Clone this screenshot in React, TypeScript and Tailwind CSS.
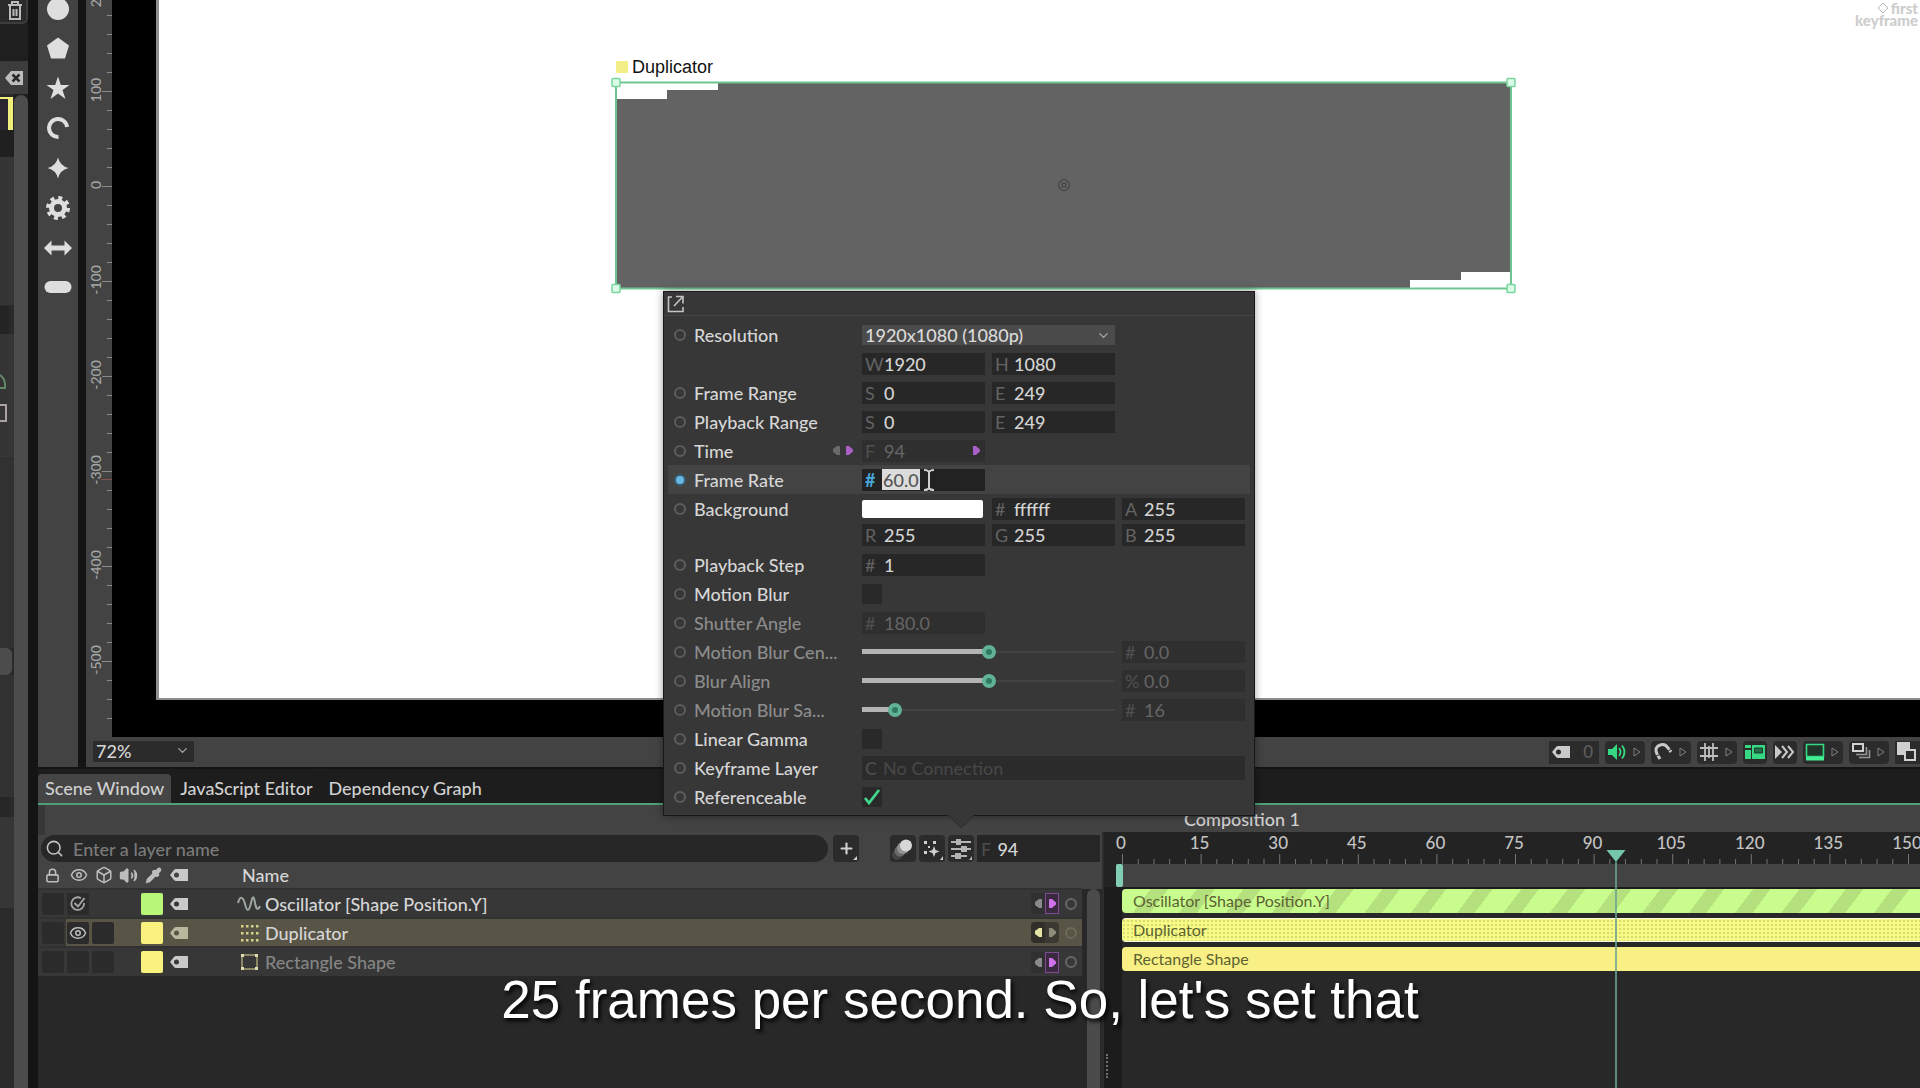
import type { ReactNode } from 'react';
import { Box, ChevronDown, Eye, Lock, Pipette, Plus, Search, Volume2 } from 'lucide-react';

const ZERO_FRAME_X = 0;
const FRAMES_PER_LABEL = 15;
const LABEL_SPACING = 78.6;

interface FieldProps {
  id?: string;
  prefix: string;
  value: string;
  label: string;
  dim?: boolean;
  className?: string;
  children?: ReactNode;
}

function Field({ id, prefix, value, label, dim, className = 'w-[123px]', children }: FieldProps) {
  return (
    <div className={`flex h-[22px] shrink-0 items-center pl-[3px] ${dim ? 'bg-[#2f2f2f]' : 'bg-[#272727]'} ${className}`}>
      <span className={`w-[19px] shrink-0 font-normal ${dim ? 'text-[#505050]' : 'text-[#636363]'}`}>{prefix}</span>
      <input
        id={id}
        aria-label={label}
        defaultValue={value}
        className={`h-full w-full min-w-0 bg-transparent outline-none ${dim ? 'font-normal text-[#666]' : 'text-[#d4d4d4]'}`}
      />
      {children}
    </div>
  );
}

interface RowProps {
  label?: string;
  htmlFor?: string;
  dim?: boolean;
  active?: boolean;
  keys?: boolean;
  children: ReactNode;
}

function Row({ label, htmlFor, dim, active, keys, children }: RowProps) {
  return (
    <div className={`mx-1 flex h-[29px] items-center ${active ? 'bg-[#434343]' : ''}`}>
      <span className="flex w-[26px] shrink-0 justify-center pr-[3px]">
        {label && (
          <span
            className={`size-3 rounded-full border-2 ${active ? 'border-[#365b70] bg-[#6ab8e4]' : 'border-[#5c5c5c]'}`}
          />
        )}
      </span>
      <div className={`flex w-[168px] shrink-0 items-center ${dim ? 'text-[#8c8c8c]' : 'text-[#d6d6d6]'}`}>
        <label htmlFor={htmlFor} className="whitespace-nowrap">{label}</label>
        {keys && (
          <span className="mr-2 ml-auto flex gap-1">
            <KeyArrow left color="#6a6a6a" />
            <KeyArrow color="#a95fc6" />
          </span>
        )}
      </div>
      <div className="flex flex-1 items-center gap-[7px]">{children}</div>
    </div>
  );
}

function KeyArrow({ left, color }: { left?: boolean; color: string }) {
  return (
    <svg width="9" height="11" viewBox="0 0 9 11" className="shrink-0">
      <path d={left ? 'M8 1H5L1 4v3l4 3h3z' : 'M1 1h3l4 3.500v2L4 10H1z'} fill={color} />
    </svg>
  );
}

function Tick({ id, checked }: { id: string; checked?: boolean }) {
  return (
    <span className="relative flex size-5">
      <input id={id} type="checkbox" defaultChecked={checked} className="size-5 appearance-none bg-[#292929]" />
      {checked && (
        <svg viewBox="0 0 20 20" className="pointer-events-none absolute inset-0">
          <path d="M3 11l4 5L17 3" fill="none" stroke="#42d78c" strokeWidth="2.800" />
        </svg>
      )}
    </span>
  );
}

function Slider({ id, value, max }: { id: string; value: number; max: number }) {
  const fill = `${(value / max) * 100}%`;
  return (
    <input
      id={id}
      type="range"
      min={0}
      max={max}
      defaultValue={value}
      className="h-[14px] w-[253px] appearance-none bg-no-repeat [background-position:left_center] [&::-webkit-slider-thumb]:size-[14px] [&::-webkit-slider-thumb]:appearance-none [&::-webkit-slider-thumb]:rounded-full [&::-webkit-slider-thumb]:border-4 [&::-webkit-slider-thumb]:border-[#62b297] [&::-webkit-slider-thumb]:bg-[#2f7a62]"
      style={{
        backgroundImage: 'linear-gradient(#b4b4b4, #b4b4b4), linear-gradient(#424242, #424242)',
        backgroundSize: `${fill} 5px, 100% 2px`,
      }}
    />
  );
}

function TagIcon({ color = '#c9c9c9' }: { color?: string }) {
  return (
    <svg width="20" height="14" viewBox="0 0 20 14" className="shrink-0">
      <path
        d="M1 7L5 2Q6 1 7 1H19V13H7Q6 13 5 12ZM7.500 4.500a2.500 2.500 0 1 0 0 5a2.500 2.500 0 1 0 0-5z"
        fill={color}
        fillRule="evenodd"
      />
    </svg>
  );
}

function SettingsPopup() {
  return (
    <section
      aria-label="Composition settings"
      className="absolute right-[-281px] bottom-full z-10 mb-[19px] w-[592px] border border-[#181818] bg-[#373737] pb-1 text-left text-[18px] leading-[22px] shadow-[0_0_8px_rgba(0,0,0,0.4)]"
    >
      <div className="mb-1 flex h-[24px] items-center border-b border-[#444] pl-[3px]">
        <button aria-label="Open in window">
          <svg width="18" height="18" viewBox="0 0 18 18" fill="none" stroke="#c4c4c4" strokeWidth="1.600">
            <path d="M5 2H1.500v14.500H16V12M7 11L15 2.500M9 1.500h7v7" />
          </svg>
        </button>
      </div>
      <Row label="Resolution" htmlFor="resolution">
        <div className="relative">
          <select
            id="resolution"
            className="h-[20px] w-[253px] appearance-none bg-[#4b4b4b] pl-[3px] text-[18px] leading-[20px] text-[#dadada] outline-none"
          >
            <option>1920x1080 (1080p)</option>
          </select>
          <ChevronDown size={15} className="pointer-events-none absolute top-1 right-1 text-[#aaa]" />
        </div>
      </Row>
      <Row>
        <Field prefix="W" value="1920" label="Width" />
        <Field prefix="H" value="1080" label="Height" />
      </Row>
      <Row label="Frame Range" htmlFor="frame-start">
        <Field id="frame-start" prefix="S" value="0" label="Frame start" />
        <Field prefix="E" value="249" label="Frame end" />
      </Row>
      <Row label="Playback Range" htmlFor="play-start">
        <Field id="play-start" prefix="S" value="0" label="Playback start" />
        <Field prefix="E" value="249" label="Playback end" />
      </Row>
      <Row label="Time" htmlFor="time" keys>
        <Field id="time" prefix="F" value="94" label="Time" dim>
          <span className="pr-1"><KeyArrow color="#a95fc6" /></span>
        </Field>
      </Row>
      <Row label="Frame Rate" htmlFor="frame-rate" active>
        <div className="relative flex h-[22px] w-[123px] items-center bg-[#222] pl-[3px]">
          <span className="w-[17px] font-bold text-[#46a6d8]">#</span>
          <input
            id="frame-rate"
            defaultValue="60.0"
            className="h-[21px] w-[38px] bg-[#dcdcdc] px-px text-[#555] outline-none"
          />
          <svg width="12" height="22" viewBox="0 0 12 22" className="absolute top-0 left-[61px]">
            <path d="M1 1q4 0 5 2q1-2 5-2M1 21q4 0 5-2q1 2 5 2M6 3v16" fill="none" stroke="#cfcfcf" strokeWidth="2" />
          </svg>
        </div>
      </Row>
      <Row label="Background" htmlFor="background">
        <button id="background" aria-label="Background colour" className="mr-[2px] h-[18px] w-[121px] rounded-xs bg-white" />
        <Field prefix="#" value="ffffff" label="Hex" />
        <Field prefix="A" value="255" label="Alpha" />
      </Row>
      <div className="-mt-[3px] mb-px">
        <Row>
          <Field prefix="R" value="255" label="Red" />
          <Field prefix="G" value="255" label="Green" />
          <Field prefix="B" value="255" label="Blue" />
        </Row>
      </div>
      <Row label="Playback Step" htmlFor="step">
        <Field id="step" prefix="#" value="1" label="Playback step" />
      </Row>
      <Row label="Motion Blur" htmlFor="motion-blur">
        <Tick id="motion-blur" />
      </Row>
      <Row label="Shutter Angle" htmlFor="shutter" dim>
        <Field id="shutter" prefix="#" value="180.0" label="Shutter angle" dim />
      </Row>
      <Row label="Motion Blur Cen..." htmlFor="centre" dim>
        <Slider id="centre" value={50} max={100} />
        <Field prefix="#" value="0.0" label="Motion blur centre" dim />
      </Row>
      <Row label="Blur Align" htmlFor="align" dim>
        <Slider id="align" value={50} max={100} />
        <Field prefix="%" value="0.0" label="Blur align amount" dim />
      </Row>
      <Row label="Motion Blur Sa..." htmlFor="samples" dim>
        <Slider id="samples" value={11} max={100} />
        <Field prefix="#" value="16" label="Motion blur samples" dim />
      </Row>
      <Row label="Linear Gamma" htmlFor="gamma">
        <Tick id="gamma" />
      </Row>
      <Row label="Keyframe Layer" htmlFor="key-layer">
        <div className="flex h-[24px] w-[383px] items-center bg-[#2b2b2b] pl-[3px]">
          <span className="w-[19px] text-[#4c4c4c]">C</span>
          <input
            id="key-layer"
            placeholder="No Connection"
            className="w-full min-w-0 bg-transparent outline-none placeholder:text-[#464646]"
          />
        </div>
      </Row>
      <Row label="Referenceable" htmlFor="referenceable">
        <Tick id="referenceable" checked />
      </Row>
      <svg width="28" height="14" viewBox="0 0 28 14" className="absolute top-full right-[279px]">
        <path d="M1 0L14 13L27 0" fill="#373737" stroke="#2a2a2a" strokeWidth="1" />
      </svg>
    </section>
  );
}

// Buttons of the vertical shape bar, drawn on a 28 unit grid
const shapes = [
  { name: 'Ellipse', draw: <circle cx="14" cy="15" r="11" /> },
  { name: 'Polygon', draw: <path d="M14 3.500L25 11.500L21 24.500H7L3 11.500z" strokeLinejoin="round" /> },
  { name: 'Star', draw: <path d="M14 2.500L16.800 11H25.500L18.500 16L21.500 25L14 19.500L6.500 25L9.500 16L2.500 11H11.200z" /> },
  {
    name: 'Arc',
    draw: <path d="M23 13A9 9 0 1 0 14.500 23" fill="none" stroke="#dedede" strokeWidth="4" />,
  },
  { name: 'Super Ellipse', draw: <path d="M14 3.500Q16 12 24.500 14Q16 16 14 24.500Q12 16 3.500 14Q12 12 14 3.500z" /> },
  {
    name: 'Cog',
    draw: (
      <>
        <circle cx="14" cy="14" r="6.500" fill="none" stroke="#dedede" strokeWidth="5" />
        <circle cx="14" cy="14" r="10" fill="none" stroke="#dedede" strokeWidth="4" strokeDasharray="3.900 3.950" />
      </>
    ),
  },
  { name: 'Arrow', draw: <path d="M0 14L7.500 6.500V11.500H20.500V6.500L28 14L20.500 21.500V16.500H7.500V21.500z" /> },
  { name: 'Capsule', draw: <rect x="0.500" y="7" width="27" height="12" rx="6" /> },
];

function ShapeBar() {
  return (
    <nav aria-label="Shapes" className="w-10 shrink-0 overflow-hidden bg-[#434343]">
      <div className="-mt-3 flex flex-col">
        {shapes.map((s) => (
          <button key={s.name} aria-label={s.name} className="flex h-10 items-center justify-center">
            <svg width="28" height="28" viewBox="0 0 28 28" fill="#dedede">{s.draw}</svg>
          </button>
        ))}
      </div>
    </nav>
  );
}

function VerticalRuler() {
  const ticks = Array.from({ length: 39 }, (_, i) => i);
  return (
    <div className="relative w-[26px] shrink-0 bg-[#434343]">
      <svg className="absolute inset-0 h-full w-full" fontFamily="Lato, sans-serif" fontSize="14">
        {ticks.map((i) => {
          const y = 15 + i * 19;
          const major = (i - 4) % 5 === 0;
          return <rect key={i} x={major ? 16 : 21} y={y} width={major ? 10 : 5} height="1" fill="#8b8b8b" />;
        })}
        <rect x="15" y="479" width="11" height="1" fill="#875055" />
        {[200, 100, 0, -100, -200, -300, -400, -500].map((v, i) => (
          <text key={v} transform={`translate(15 ${i * 95 - 5}) rotate(-90)`} textAnchor="middle" fill="#a6a6a6">{v}</text>
        ))}
      </svg>
    </div>
  );
}

function Viewport() {
  return (
    <div className="relative flex-1 overflow-hidden bg-black pb-[37px] pl-[44px]">
      <div className="h-full border-b-2 border-l-3 border-[#8d8d8d] bg-white" />
      <div className="absolute top-[57px] left-[504px] flex items-center gap-1">
        <span className="size-3 bg-[#f3ee85]" />
        <span className="font-['Liberation_Sans',sans-serif] text-[18px] leading-5 text-[#111]">Duplicator</span>
      </div>
      <svg width="906" height="217" viewBox="0 0 906 217" className="absolute top-[77px] left-[499px]">
        <path d="M5 22H56V13H107V5H900V195H850V203H799V211H5z" fill="#636363" />
        <rect x="5" y="5.500" width="895" height="206" fill="none" stroke="#6fc592" strokeWidth="2" />
        <g fill="#d9fbe8" stroke="#79d59d" strokeWidth="1.500">
          <rect x="1" y="1.500" width="8" height="8" rx="1" />
          <rect x="896" y="1.500" width="8" height="8" rx="1" />
          <rect x="1" y="207.500" width="8" height="8" rx="1" />
          <rect x="896" y="207.500" width="8" height="8" rx="1" />
        </g>
        <g fill="none" stroke="#3f3f3f">
          <circle cx="453" cy="108" r="5.500" />
          <circle cx="453" cy="108" r="2" />
          <path d="M449 104l2.500 2.500M457 104l-2.500 2.500M449 112l2.500-2.500M457 112l-2.500-2.500" />
        </g>
      </svg>
      <div className="absolute top-[2px] right-[2px] text-right text-[15px] leading-3 font-black text-[#cdcdcd]">
        <div className="flex items-center justify-end gap-[2px]">
          <svg width="12" height="12" viewBox="0 0 12 12">
            <path d="M6 1L11 6L6 11L1 6z" fill="none" stroke="#b5b5b5" />
          </svg>
          first
        </div>
        <div>keyframe</div>
      </div>
    </div>
  );
}

function MenuArrow() {
  return (
    <svg width="8" height="10" viewBox="0 0 8 10">
      <path d="M1 1L7 5L1 9z" fill="none" stroke="#808080" />
    </svg>
  );
}

interface ViewButtonProps {
  label: string;
  menu?: boolean;
  children: ReactNode;
}

function ViewButton({ label, menu, children }: ViewButtonProps) {
  return (
    <button
      aria-label={label}
      className={`flex h-[23px] shrink-0 items-center rounded-sm bg-[#2b2b2b] px-[2px] ${menu ? 'w-10 justify-between pr-1' : 'w-6 justify-center'}`}
    >
      <svg width="20" height="20" viewBox="0 0 20 20" className="shrink-0">{children}</svg>
      {menu && <MenuArrow />}
    </button>
  );
}

function StatusBar() {
  return (
    <div className="flex h-[30px] items-center bg-[#434343] pl-[7px]">
      <div className="relative">
        <select
          aria-label="Zoom"
          className="h-[21px] w-[101px] appearance-none bg-[#2b2b2b] pl-[3px] text-[18px] leading-[21px] text-[#d6d6d6] outline-none"
        >
          <option>72%</option>
        </select>
        <ChevronDown size={15} className="pointer-events-none absolute top-[3px] right-1 text-[#aaa]" />
      </div>
      <div className="-mr-[11px] ml-auto flex items-center gap-[6px]">
        <button aria-label="Tags" className="flex h-[23px] w-[50px] items-center justify-between bg-[#2b2b2b] px-[2px] pr-[6px] text-[17px] text-[#5c5c5c]">
          <TagIcon />
          0
        </button>
        <ViewButton label="Audio" menu>
          <path d="M1 7h4l5-5v16l-5-5H1z" fill="#36d981" />
          <path d="M12 6q3 4 0 8M15 3.500q5 6.500 0 13" fill="none" stroke="#36d981" strokeWidth="1.800" />
        </ViewButton>
        <ViewButton label="Snapping" menu>
          <path d="M7 17L4 12Q1 5 7 3Q12 1 15 6L18 10" fill="none" stroke="#c9c9c9" strokeWidth="3" />
          <path d="M3 14l5-2M14 10l4-3" stroke="#2b2b2b" />
        </ViewButton>
        <ViewButton label="Grid" menu>
          <path d="M6 1v18M14 1v18M1 6h18M1 14h18M10 4v12" stroke="#bdbdbd" strokeWidth="1.800" />
        </ViewButton>
        <ViewButton label="Heads up display">
          <path d="M0 3h6v3H0zM0 8h6v9H0zM7 3h13v14H7z" fill="#36d981" />
          <path d="M9.500 6h8v5h-8z" fill="#256e48" stroke="#173c29" />
        </ViewButton>
        <ViewButton label="Play through">
          <path d="M0 3l7 7l-7 7z" fill="#c9c9c9" />
          <path d="M7 4l5 6l-5 6M13 4l5 6l-5 6" fill="none" stroke="#c9c9c9" strokeWidth="2" />
        </ViewButton>
        <ViewButton label="Canvas display" menu>
          <path d="M1.500 2.500h17v12h-17z" fill="#20362a" stroke="#36d981" strokeWidth="1.600" />
          <path d="M1 15h18v3.500H1z" fill="#42f093" />
        </ViewButton>
        <ViewButton label="Layers" menu>
          <path d="M2 2h10v7H2z" fill="none" stroke="#d0d0d0" strokeWidth="2" />
          <path d="M5 12.500h10.500V5M8 15.500h10.500V8" fill="none" stroke="#969696" strokeWidth="1.600" />
        </ViewButton>
        <button aria-label="Compare" className="h-[23px] w-[36px] bg-[#2b2b2b] pl-[2px]">
          <svg width="20" height="20" viewBox="0 0 20 20">
            <path d="M0 0h13v7H7v6H0z" fill="#d0d0d0" />
            <path d="M8 8h10v10H8z" fill="#2b2b2b" stroke="#d0d0d0" strokeWidth="2" />
          </svg>
        </button>
      </div>
    </div>
  );
}

// Attribute panel, of which only the right edge is on screen
function SidePanel() {
  return (
    <aside className="flex w-7 shrink-0 flex-col overflow-hidden bg-[#1f1f1f]">
      <div className="flex h-6 shrink-0 justify-center rounded-br-md border-r-2 border-b-2 border-[#3c3c3c] bg-[#2a2a2a] pl-1">
        <button aria-label="Delete">
          <svg width="16" height="20" viewBox="0 0 16 20" fill="none" stroke="#bababa" strokeWidth="2">
            <path d="M1 4h14M5 3V1h6v2M3 5v13h10V5M6.500 8v7M9.500 8v7" />
          </svg>
        </button>
      </div>
      <div className="mt-[37px] flex h-[33px] w-[31px] shrink-0 items-center bg-[#3c3c3c] pl-[4px]">
        <button aria-label="Clear">
          <svg width="20" height="16" viewBox="0 0 20 16">
            <path d="M1 8L7 1H19V15H7z" fill="#bcbcbc" />
            <path d="M8.500 4.500l7 7M15.500 4.500l-7 7" stroke="#2a2a2a" strokeWidth="2.500" />
          </svg>
        </button>
      </div>
      <div className="flex flex-1">
        <div className="flex w-[14px] flex-col bg-[#2a2a2a]">
          <div className="mt-[3px] h-[33px] w-[13px] border-t-2 border-r-5 border-[#f1ef7c] bg-[#2a2733]" />
          <div className="h-[27px] bg-[#202020]" />
          <div className="h-[148px] bg-[#353535]" />
          <div className="mt-px h-[28px] w-[9px] bg-[#242424]" />
          <div className="h-[124px] w-full bg-[#353535] pt-[38px]">
            <svg width="8" height="50" viewBox="0 0 8 50">
              <path d="M0 3q6 4 5 13H0" fill="none" stroke="#64886a" strokeWidth="2" />
              <path d="M0 33h6v16H0" fill="none" stroke="#a9a2a0" strokeWidth="2" />
            </svg>
          </div>
          <div className="mt-px h-[189px] bg-[#313131]" />
          <div className="h-[27px] w-3 rounded-r-md bg-[#4c4c4c]" />
          <div className="h-[122px] bg-[#323232]" />
          <div className="h-5 w-[9px] bg-[#262626]" />
          <div className="h-[91px] bg-[#363636]" />
        </div>
        <div className="mt-px flex-1 rounded-t-lg bg-[#4c4c4c]" />
      </div>
    </aside>
  );
}

const tabs = ['Scene Window', 'JavaScript Editor', 'Dependency Graph'];

const layers = [
  { name: 'Oscillator [Shape Position.Y]', kind: 'wave', color: 'bg-[#b8f77a]', cells: ['', 'check'], selected: false, dim: false },
  { name: 'Duplicator', kind: 'dots', color: 'bg-[#faf27e]', cells: ['', 'eye', ''], selected: true, dim: false },
  { name: 'Rectangle Shape', kind: 'rect', color: 'bg-[#faf27e]', cells: ['', '', ''], selected: false, dim: true },
];

function LayerIcon({ kind }: { kind: string }) {
  if (kind === 'wave') {
    return (
      <svg width="24" height="20" viewBox="0 0 24 20" className="-ml-[2px]">
        <path d="M1 9C3 2 6 2 8 10S12 18 14 9S17 3 18 9S21 17 23 12" fill="none" stroke="#9fa89f" strokeWidth="2" />
      </svg>
    );
  }
  if (kind === 'dots') {
    return (
      <svg width="22" height="20" viewBox="0 0 22 20" fill="#d8d38a">
        {[3, 10, 17].map((y) => [3, 8, 13, 18].map((x) => <rect key={`${x}-${y}`} x={x - 1} y={y - 1} width="2.500" height="2.500" />))}
      </svg>
    );
  }
  return (
    <svg width="22" height="20" viewBox="0 0 22 20">
      <rect x="3" y="3" width="15" height="14" fill="none" stroke="#a5a276" strokeWidth="1.500" />
      <path d="M2 2h3v3H2zM16 2h3v3h-3zM2 15h3v3H2zM16 15h3v3h-3z" fill="#dedbad" />
    </svg>
  );
}

function LayerTable() {
  const head = 'text-[#bdbdbd]';
  return (
    <table className="w-full table-fixed border-collapse text-[18px] leading-[22px]">
      <colgroup>
        <col className="w-[28px]" />
        <col className="w-[25px]" />
        <col className="w-[25px]" />
        <col className="w-[25px]" />
        <col className="w-[25px]" />
        <col className="w-[27px]" />
        <col />
        <col className="w-[51px]" />
      </colgroup>
      <thead>
        <tr className="h-[27px] bg-[#434343]">
          <th className={head}><Lock size={15} strokeWidth={2.500} className="mx-auto" aria-label="Lock" /></th>
          <th className={head}><Eye size={18} className="mx-auto" aria-label="Visible" /></th>
          <th className={head}><Box size={18} className="mx-auto" aria-label="3D" /></th>
          <th className={head}><Volume2 size={19} fill="#bdbdbd" className="mx-auto" aria-label="Audio" /></th>
          <th className={head}><Pipette size={17} fill="#bdbdbd" className="mx-auto" aria-label="Colour" /></th>
          <th className="pl-[3px]"><TagIcon /></th>
          <th className="pl-[49px] text-left font-medium text-[#d6d6d6]">Name</th>
          <th aria-label="Keys" />
        </tr>
      </thead>
      <tbody>
        {layers.map((l) => (
          <tr key={l.name} className={`h-[29px] border-t-2 border-[#313131] ${l.selected ? 'bg-[#585546]' : 'bg-[#373737]'}`}>
            {[0, 1, 2, 3].map((i) => (
              <td key={i} className={`p-0 ${i === 0 && l.selected ? 'bg-[#373737]' : ''}`}>
                {l.cells[i] !== undefined && (
                  <span className="mr-[2px] ml-auto flex size-[22px] items-center justify-center rounded-xs bg-[#2b2b2b] text-[#bdbdbd]">
                    {l.cells[i] === 'eye' && <Eye size={18} />}
                    {l.cells[i] === 'check' && (
                      <svg width="16" height="16" viewBox="0 0 16 16" fill="none" stroke="#a8a8a8" strokeWidth="1.800">
                        <path d="M11 2.200A6.300 6.300 0 1 0 14 7M4.500 7L8 10.500L14.500 2" />
                      </svg>
                    )}
                  </span>
                )}
              </td>
            ))}
            <td className="p-0">
              <button aria-label={`${l.name} colour`} className={`block size-[22px] rounded-xs ${l.color}`} />
            </td>
            <td className="pl-[3px]"><TagIcon color={l.selected ? '#b9b89f' : '#c9c9c9'} /></td>
            <td className={`pl-[46px] ${l.dim ? 'text-[#858585]' : 'text-[#d6d6d6]'}`}>
              <span className="flex items-center gap-1 whitespace-nowrap">
                <span className="flex w-[22px] shrink-0"><LayerIcon kind={l.kind} /></span>
                {l.name}
              </span>
            </td>
            <td className="p-0">
              <span className="flex items-center">
                <span className={`flex h-[21px] w-[14px] items-center justify-center ${l.selected ? 'rounded-l-sm bg-[#302f29]' : 'bg-[#303030]'}`}>
                  <KeyArrow left color={l.selected ? '#e5e2a5' : '#8a8a8a'} />
                </span>
                <span
                  className={`flex h-[21px] w-[14px] items-center justify-center ${l.selected ? 'rounded-r-sm bg-[#3a3932]' : 'border border-[#7d4b91] bg-[#3a2a40]'}`}
                >
                  <KeyArrow color={l.selected ? '#8d8b7a' : '#cf72ea'} />
                </span>
                <span className={`ml-[6px] size-3 rounded-full border-2 ${l.selected ? 'border-[#6c6a58]' : 'border-[#666]'}`} />
              </span>
            </td>
          </tr>
        ))}
      </tbody>
    </table>
  );
}

function ScenePanel() {
  const tool = 'relative flex h-[27px] w-[26px] shrink-0 items-center justify-center rounded-sm bg-[#2b2b2b]';
  return (
    <section className="flex min-w-0 flex-col bg-[#282828]">
      <div className="flex h-[30px] bg-[#434343]">
        <span className="w-[7px] bg-[#373737]" />
      </div>
      <div className="flex h-[27px] items-center bg-[#434343] pr-[2px] pl-[3px] text-[18px] leading-[22px]">
        <div className="flex h-full flex-1 items-center rounded-full bg-[#272727] pl-[4px]">
          <Search size={19} className="shrink-0 text-[#c4c4c4]" />
          <input
            aria-label="Layer name"
            placeholder="Enter a layer name"
            className="ml-[9px] w-full bg-transparent outline-none placeholder:text-[#7b7b7b]"
          />
        </div>
        <button aria-label="Add layer" className={`${tool} mr-[31px] ml-[5px]`}>
          <Plus size={17} strokeWidth={3} className="text-[#d0d0d0]" />
          <svg width="4" height="4" viewBox="0 0 4 4" className="absolute right-[2px] bottom-[2px]">
            <path d="M4 0v4H0z" fill="#d0d0d0" />
          </svg>
        </button>
        <div className="flex gap-[3px]">
          <button aria-label="Motion blur" className={tool}>
            <svg width="24" height="24" viewBox="0 0 24 24">
              <circle cx="6" cy="18" r="5" fill="#444" />
              <circle cx="9" cy="14" r="5.500" fill="#6a6a6a" />
              <circle cx="12" cy="11" r="6" fill="#949494" />
              <circle cx="15" cy="8.500" r="6" fill="#d8d8d8" />
            </svg>
          </button>
          <button aria-label="Behaviours" className={tool}>
            <svg width="24" height="24" viewBox="0 0 24 24" fill="#d0d0d0">
              <path d="M4 4h3v3H4zM13 4h3v3h-3zM4 14h3v3H4zM8 9h2v2H8zM14 9l1.500 4l4 1.500l-4 1.500l-1.500 4l-1.500-4l-4-1.500l4-1.500zM23 19v4h-3z" />
            </svg>
          </button>
          <div className="relative">
            <button aria-label="Composition settings" className={tool}>
              <svg width="24" height="24" viewBox="0 0 24 24" fill="#b4b4b4">
                <path d="M2 4h20v2H2zM2 11h20v2H2zM2 18h16v2H2zM23 19v4h-3z" />
                <path d="M7 2h5v6H7zM12 9h6v6h-6zM6 16h6v6H6z" />
              </svg>
            </button>
            <SettingsPopup />
          </div>
        </div>
        <div className="ml-[3px] flex h-full w-[123px] items-center bg-[#262626] pl-1">
          <span className="w-[19px] text-[#4c4c4c]">F</span>
          <input aria-label="Current frame" defaultValue="94" className="w-full min-w-0 bg-transparent text-[#d6d6d6] outline-none" />
        </div>
      </div>
      <div className="flex flex-1 bg-[#282828]">
        <div className="min-w-0 flex-1"><LayerTable /></div>
        <div className="flex w-[20px] shrink-0 flex-col">
          <div className="h-[27px] bg-[#434343]" />
          <div className="mr-[2px] ml-[5px] flex-1 rounded-t-lg bg-[#4b4b4b]" />
        </div>
      </div>
    </section>
  );
}

function Timeline() {
  const labels = Array.from({ length: 11 }, (_, i) => i * FRAMES_PER_LABEL);
  const ticks = Array.from({ length: 51 }, (_, i) => i);
  const playhead = ZERO_FRAME_X + (94 / FRAMES_PER_LABEL) * LABEL_SPACING;
  const bar = 'h-6 rounded-l-sm pl-[11px] text-[16px] font-normal leading-6';
  return (
    <section className="relative flex min-w-0 flex-col overflow-hidden bg-[#282828]">
      <div className="h-[27px] bg-[#434343] pl-[82px] text-[18px] leading-[28px] text-[#d0d0d0]">Composition 1</div>
      <div className="flex flex-1 border-l-2 border-[#2d2d2d]">
        <div className="flex w-[18px] shrink-0 flex-col items-center">
          <div className="h-[55px] w-full bg-[#232323]" />
          <div className="flex w-full flex-1 items-end bg-[#1c1c1c] pb-[10px] pl-[2px]">
            <span className="h-6 border-l-2 border-dotted border-[#707070]" />
          </div>
        </div>
        <div className="relative min-w-0 flex-1">
          <svg className="block h-8 w-full overflow-visible bg-[#232323]" fontFamily="Lato, sans-serif" fontSize="17" fill="#c4c4c4">
            {ticks.map((i) => (
              <rect
                key={i}
                x={ZERO_FRAME_X + (i * LABEL_SPACING) / 5}
                y={i % 5 === 0 ? 22 : 27}
                width="1"
                height={i % 5 === 0 ? 10 : 5}
                fill="#757575"
              />
            ))}
            {labels.map((v, i) => (
              <text key={v} x={ZERO_FRAME_X - 1 + i * LABEL_SPACING} y="17" textAnchor="middle">{v}</text>
            ))}
          </svg>
          <div className="-ml-[6px] flex h-[23px] bg-[#434343]">
            <span className="h-[23px] w-[7px] rounded-xs bg-[#82cdb6]" />
          </div>
          <div className="flex flex-col gap-[5px] border-t-2 border-[#1c1c1c] text-[#5d6232]">
            <div className={`${bar} bg-[repeating-linear-gradient(127deg,#c8fd8e_0px,#c8fd8e_23px,#b5e07e_23px,#b5e07e_37px)]`}>
              Oscillator [Shape Position.Y]
            </div>
            <div className={`${bar} border-y border-[#fcfae0] bg-[#f7fb86] bg-[radial-gradient(#d8da72_1px,transparent_1px)] bg-[size:4px_4px] leading-[22px]`}>
              Duplicator
            </div>
            <div className={`${bar} bg-[#f9f085]`}>Rectangle Shape</div>
          </div>
          <div className="absolute top-[18px] bottom-0 -ml-[9px]" style={{ left: playhead }}>
            <svg width="20" height="12" viewBox="0 0 20 12" className="block">
              <path d="M0.500 0H19.500L10 12z" fill="#74c7a9" />
            </svg>
            <div className="ml-[9px] h-full w-[2px] bg-[#6aa291]/80" />
          </div>
        </div>
      </div>
    </section>
  );
}

export default function App() {
  return (
    <div className="relative flex min-h-screen overflow-hidden bg-[#141414] font-[Lato,sans-serif] font-medium">
      <SidePanel />
      <main className="ml-[10px] flex min-w-0 flex-1 flex-col">
        <div className="flex flex-1">
          <ShapeBar />
          <div className="ml-2 flex min-w-0 flex-1 flex-col">
            <div className="flex flex-1">
              <VerticalRuler />
              <Viewport />
            </div>
            <StatusBar />
          </div>
        </div>
        <div className="mt-[2px] flex h-[36px] items-end border-b-2 border-[#4da078] bg-[#1d1d1d] text-[18px]">
          {tabs.map((t, i) => (
            <button
              key={t}
              className={`h-[29px] rounded-t-sm pr-[7px] pl-[7px] text-[#d0d0d0] ${i === 0 ? 'bg-[#454545]' : 'ml-[2px] bg-[#1d1d1d]'}`}
            >
              {t}
            </button>
          ))}
        </div>
        <div className="grid h-[283px] grid-cols-[1064fr_818fr]">
          <ScenePanel />
          <Timeline />
        </div>
      </main>
      <p className="pointer-events-none absolute inset-x-0 bottom-[56px] z-20 text-center font-['Liberation_Sans',sans-serif] text-[53px] leading-[64px] font-normal text-white [text-shadow:2px_3px_4px_#000]">
        25 frames per second. So, let's set that
      </p>
    </div>
  );
}
